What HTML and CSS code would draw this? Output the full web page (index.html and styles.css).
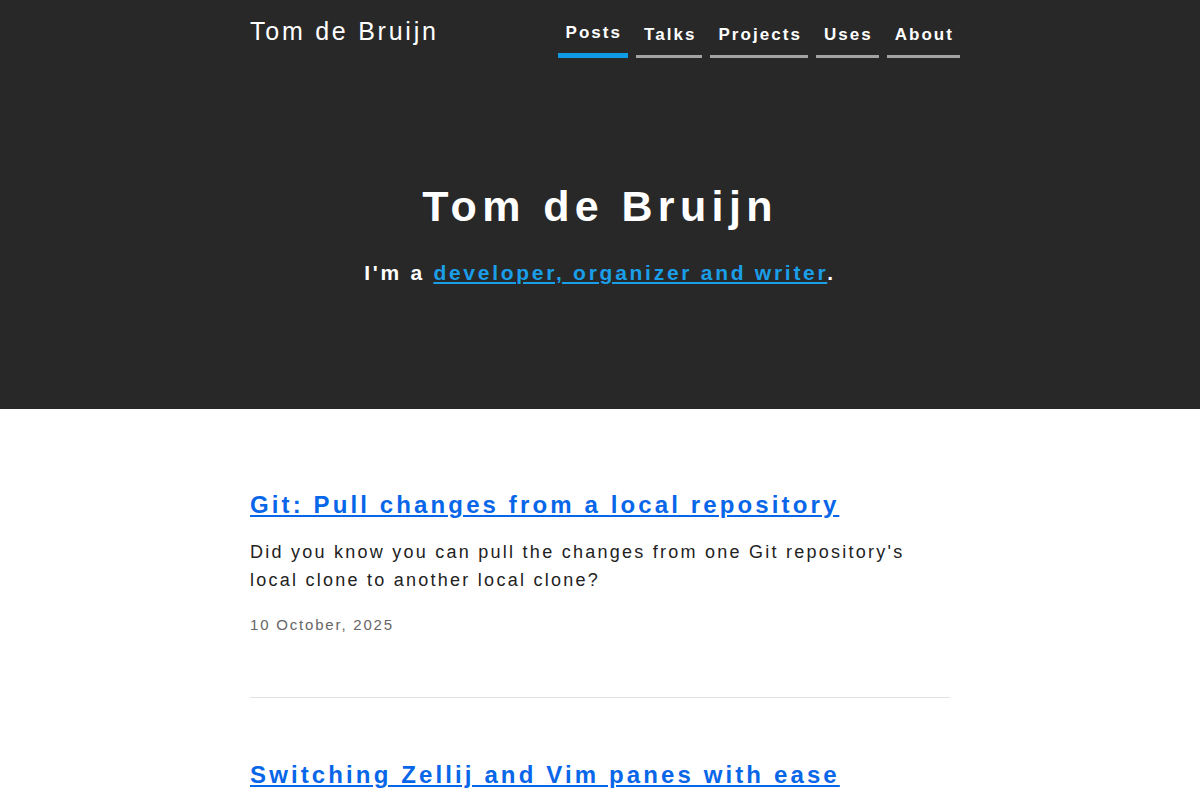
FILE: index.html
```html
<!DOCTYPE html>
<html lang="en">
<head>
    <meta charset="UTF-8">
    <meta name="viewport" content="width=device-width, initial-scale=1.0">
    <title>Tom de Bruijn</title>
    <link rel="stylesheet" href="styles.css">
</head>
<body>
    <header class="site-header">
        <div class="header-inner">
            <a class="logo" href="/">Tom de Bruijn</a>
            <nav>
                <ul class="nav-list">
                    <li><a class="nav-link active" href="/posts">Posts</a></li>
                    <li><a class="nav-link" href="/talks">Talks</a></li>
                    <li><a class="nav-link" href="/projects">Projects</a></li>
                    <li><a class="nav-link" href="/uses">Uses</a></li>
                    <li><a class="nav-link" href="/about">About</a></li>
                </ul>
            </nav>
        </div>
        <div class="hero">
            <h1>Tom de Bruijn</h1>
            <p>I'm a <a href="/about">developer, organizer and writer</a>.</p>
        </div>
    </header>

    <main class="posts">
        <article class="post">
            <h2><a href="/posts/git-pull-local-repository">Git: Pull changes from a local repository</a></h2>
            <p class="summary">Did you know you can pull the changes from one Git repository's local clone to another local clone?</p>
            <time class="date">10 October, 2025</time>
        </article>
        <article class="post">
            <h2><a href="/posts/zellij-vim-panes">Switching Zellij and Vim panes with ease</a></h2>
        </article>
    </main>
</body>
</html>
```

FILE: styles.css
```css
body {
    font-family: "Liberation Sans", Arial, sans-serif;
    margin: 0;
    background-color: #fff;
    color: #222;
}

.site-header {
    background-color: #282828;
    color: white;
    height: 409px;
}

.header-inner {
    width: 710px;
    margin: 0 auto;
    padding-left: 10px;
    display: flex;
    justify-content: space-between;
    align-items: flex-start;
}

.logo {
    color: white;
    text-decoration: none;
    font-size: 25px;
    line-height: 30px;
    letter-spacing: 0.11em;
    margin-top: 16px;
}

.nav-list {
    list-style: none;
    margin: 0;
    padding: 0;
    display: flex;
    align-items: flex-end;
    gap: 8px;
    height: 58px;
}

.nav-link {
    display: block;
    color: white;
    text-decoration: none;
    font-size: 17px;
    font-weight: bold;
    line-height: 20px;
    letter-spacing: 0.12em;
    padding: 0 6px 10px 8px;
    border-bottom: 3px solid #a3a3a3;
}

.nav-link.active {
    border-bottom: 5px solid #0f9ae6;
}

.hero {
    text-align: center;
    padding-top: 122px;
}

.hero h1 {
    margin: 0;
    font-size: 43px;
    line-height: 52px;
    letter-spacing: 0.125em;
}

.hero p {
    margin: 26px 0 0;
    font-size: 21px;
    line-height: 30px;
    font-weight: bold;
    letter-spacing: 0.13em;
}

.hero p a {
    color: #1a9ee8;
}

.posts {
    width: 700px;
    margin: 0 auto;
    padding-top: 80px;
}

.post {
    padding-bottom: 62px;
    margin-bottom: 61px;
    border-bottom: 1px solid #e2e2e2;
}

.post:last-child {
    border-bottom: none;
}

.post h2 {
    margin: 0;
    font-size: 24px;
    line-height: 32px;
    letter-spacing: 0.13em;
}

.post h2 a {
    color: #0866e9;
}

.summary {
    margin: 17px 0 21px;
    font-size: 18px;
    line-height: 28px;
    letter-spacing: 0.125em;
    color: #222;
}

.date {
    display: block;
    font-size: 15px;
    line-height: 20px;
    letter-spacing: 0.12em;
    color: #666;
}
```
